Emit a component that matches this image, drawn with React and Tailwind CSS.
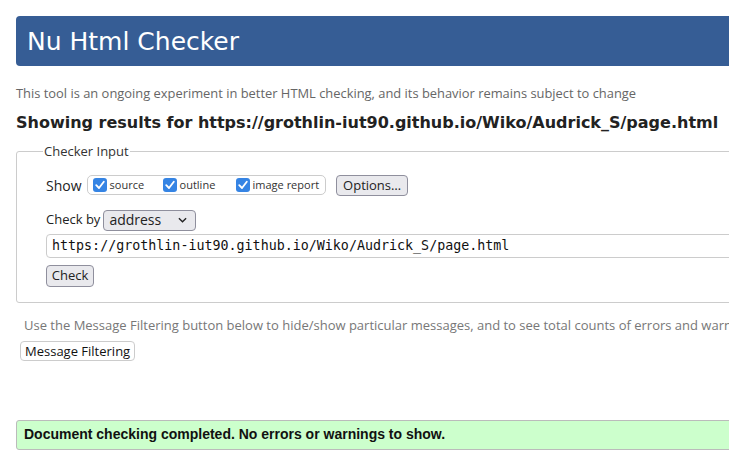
import React from "react";

const Check = () => (
  <span className="inline-flex items-center justify-center w-[14px] h-[14px] rounded-[3px] bg-[#3584e4] mr-[3px]">
    <svg viewBox="0 0 14 14" className="w-[14px] h-[14px]">
      <path d="M3.2 7.2 L6 10 L10.8 3.8" fill="none" stroke="white" strokeWidth="1.8" strokeLinecap="round" strokeLinejoin="round" />
    </svg>
  </span>
);

export default function App() {
  return (
    <div className="w-[729px] h-[463px] overflow-hidden bg-white" style={{ fontFamily: "'Open Sans', 'Noto Sans', sans-serif" }}>
      <div className="w-[800px] pl-4 pt-4">
        {/* Header */}
        <div className="h-[50px] bg-[#365d95] rounded-l-[4px] flex items-center pl-[11px]">
          <h1 className="text-white text-[25px] leading-none font-['DejaVu_Sans',sans-serif]">Nu Html Checker</h1>
        </div>

        <p className="mt-[19px] text-[12.9px] text-[#666] leading-4">
          This tool is an ongoing experiment in better HTML checking, and its behavior remains subject to change
        </p>
        <h2 className="mt-[12px] text-[16px] font-bold text-[#222] leading-5 font-['DejaVu_Sans',sans-serif] whitespace-nowrap">
          Showing results for https://grothlin-iut90.github.io/Wiko/Audrick_S/page.html
        </h2>

        {/* Checker Input */}
        <fieldset className="mt-[9px] border border-[#ccc] rounded-l-[3px] h-[161px] pl-[29px] pt-0">
          <legend className="text-[13px] text-[#333] px-[1px] ml-[-3px]">Checker Input</legend>
          <div className="flex items-center mt-[13px] h-[21px]">
            <span className="text-[14px] text-[#222] mr-[5px]">Show</span>
            <div className="flex items-center h-[20px] border border-[#ccc] rounded-[5px] pl-[5px] pr-[6px] text-[11px] text-[#333]">
              <label className="flex items-center w-[70px]"><Check />source</label>
              <label className="flex items-center w-[73px]"><Check />outline</label>
              <label className="flex items-center"><Check />image report</label>
            </div>
            <button className="ml-[10px] h-[21px] px-[6px] border border-[#8f8f9d] rounded-[4px] bg-[#e9e9ed] text-[13px] text-[#222] leading-none">Options…</button>
          </div>
          <div className="flex items-center mt-[14px] h-[21px]">
            <span className="text-[13px] text-[#222] mr-[3px]">Check by</span>
            <div className="w-[93px] h-[21px] border border-[#8f8f9d] rounded-[4px] bg-[#e9e9ed] flex items-center justify-between pl-[5px] pr-[8px] text-[14px] text-[#222]">
              <span className="leading-none">address</span>
              <svg viewBox="0 0 10 6" className="w-[9px] h-[6px]"><path d="M1 1 L5 5 L9 1" fill="none" stroke="#222" strokeWidth="1.5" /></svg>
            </div>
          </div>
          <div className="mt-[3px] h-[24px] border border-[#ccc] rounded-l-[4px] flex items-center pl-[5px] text-[13.33px] text-[#111] font-['DejaVu_Sans_Mono',monospace] whitespace-nowrap">
            https://grothlin-iut90.github.io/Wiko/Audrick_S/page.html
          </div>
          <button className="mt-[7px] h-[22px] w-[48px] border border-[#8f8f9d] rounded-[4px] bg-[#e9e9ed] text-[13px] text-[#222] leading-none">Check</button>
        </fieldset>

        <p className="mt-[14px] ml-[8px] text-[13px] text-[#777] leading-4 whitespace-nowrap">
          Use the Message Filtering button below to hide/show particular messages, and to see total counts of errors and warnings.
        </p>
        <button className="mt-[8px] ml-[4px] h-[20px] px-[4px] border border-[#ccc] rounded-[4px] bg-white text-[13px] text-[#111] leading-none">Message Filtering</button>

        <div className="mt-[58px] h-[30px] border border-[#bbb] rounded-l-[3px] bg-[#ccffcc] flex items-center pl-[7px]">
          <p className="text-[14px] font-bold text-[#111] font-['Liberation_Sans',Arial,sans-serif]">Document checking completed. No errors or warnings to show.</p>
        </div>
      </div>
    </div>
  );
}
